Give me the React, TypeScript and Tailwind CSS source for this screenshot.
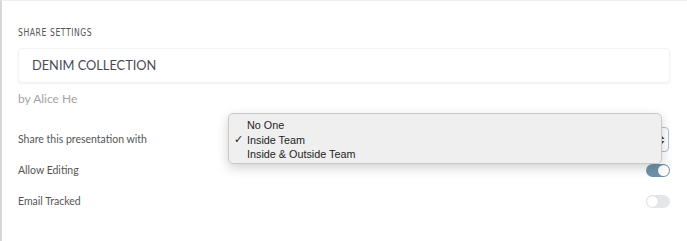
import React from "react";

const Toggle = ({ on }: { on: boolean }) => (
  <div
    className={`w-[24px] h-[13px] rounded-full flex items-center px-[1px] ${
      on ? "bg-[#6f94aa] justify-end" : "bg-[#e5e6e7] justify-start"
    }`}
  >
    <span className="w-[11px] h-[11px] rounded-full bg-white shadow-[0_0_1px_rgba(0,0,0,0.2)]" />
  </div>
);

const options = ["No One", "Inside Team", "Inside & Outside Team"];

export default function App() {
  const selected = "Inside Team";
  return (
    <div className="relative w-[687px] h-[241px] bg-white border-l-2 border-t border-l-[#d3d7db] border-t-[#eeeeee] overflow-hidden font-['Lato','Open_Sans',sans-serif]">
      <div className="pl-[16px] pr-[17px] pt-[23px]">
        <div className="h-[12px] leading-[12px]">
          <span className="inline-block origin-left scale-x-[0.78] font-['DejaVu_Sans_Condensed','DejaVu_Sans',sans-serif] [font-stretch:condensed] text-[11px] tracking-[0.7px] text-[#555555] whitespace-nowrap">
            SHARE SETTINGS
          </span>
        </div>

        <div className="mt-[12px] h-[35px] rounded-[4px] bg-white border border-[#f3f3f3] shadow-[0_1px_2px_rgba(0,0,0,0.06)] flex items-center pl-[13px]">
          <span className="text-[12.8px] text-[#4a4a57]">DENIM COLLECTION</span>
        </div>

        <div className="mt-[8px] h-[16px] leading-[16px] text-[12px] text-[#a3a3a3]">
          by Alice He
        </div>

        <div className="mt-[17px] flex flex-col">
          <div className="h-[31px] flex items-center justify-between">
            <span className="text-[10.5px] text-[#555555]">
              Share this presentation with
            </span>
            <div className="mr-[1px] w-[200px] h-[25px] rounded-[4px] border border-[#a9c1d1] bg-white flex items-center justify-end pr-[3px]">
              <svg width="6" height="10" viewBox="0 0 6 10">
                <path d="M3 1 L5.5 4 H0.5 Z" fill="#444" />
                <path d="M3 9 L5.5 6 H0.5 Z" fill="#444" />
              </svg>
            </div>
          </div>
          <div className="h-[31px] flex items-center justify-between">
            <span className="text-[10.5px] text-[#555555]">Allow Editing</span>
            <Toggle on />
          </div>
          <div className="h-[31px] flex items-center justify-between">
            <span className="text-[10.5px] text-[#555555]">Email Tracked</span>
            <Toggle on={false} />
          </div>
        </div>
      </div>

      <div className="absolute left-[226px] top-[112px] w-[434px] h-[51px] rounded-[5px] bg-[#efefef] border border-[#c9c9c9] shadow-[0_4px_12px_rgba(0,0,0,0.18)] pt-[4px] font-['Liberation_Sans','Helvetica',sans-serif] text-[10.8px] text-[#1e1e1e]">
        {options.map((o) => (
          <div key={o} className="h-[14.5px] leading-[14.5px] flex items-center">
            <span className="w-[18px] pl-[5px] font-['DejaVu_Sans',sans-serif] font-bold text-[11px] text-[#222]">
              {o === selected ? "✓" : ""}
            </span>
            <span>{o}</span>
          </div>
        ))}
      </div>
    </div>
  );
}
